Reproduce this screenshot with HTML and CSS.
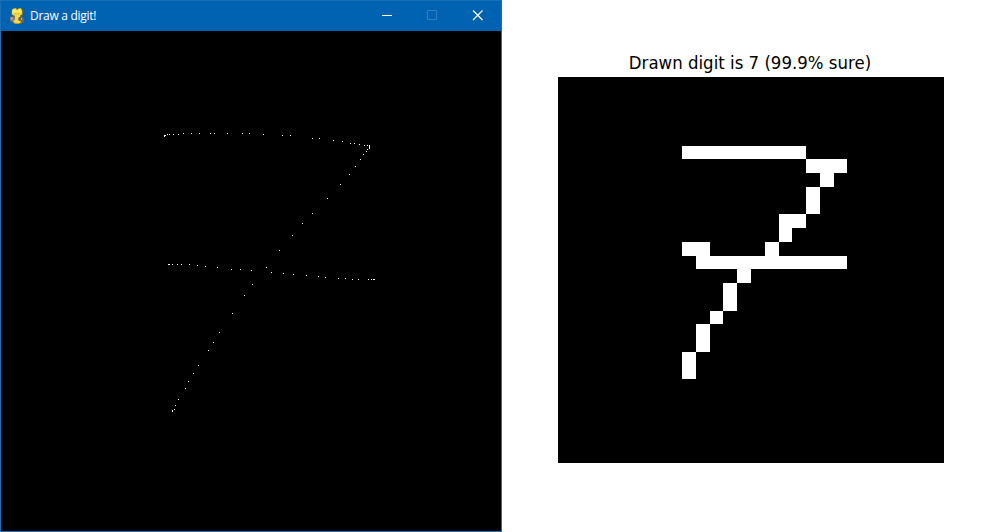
FILE: index.html
```
<!DOCTYPE html>
<html lang="en">
<head>
<meta charset="utf-8">
<title>Draw a digit!</title>
<link rel="stylesheet" href="styles.css">
</head>
<body>
<main class="desktop">
  <section class="window">
    <header class="titlebar">
      <svg class="app-icon" viewBox="0 0 16 18" width="16" height="18">
        <path d="M3 2 5 1H7L8 2 10 1H12L14 3V8L12 9 15 11V14L12 17H5L3 15 1 14V10L4 9 2 7Z" fill="#736d48"/>
        <path d="M3 3 5 1.500H7L8 3 10 1.500H12L13 4V7L11 8.500H5L3 7Z" fill="#fbe34a"/>
        <path d="M6 8H11V13L12 15 10 16.500H6L4 14V13L6 12Z" fill="#f3d943"/>
        <path d="M1 10H4L6 11V13L4 14 2 14 1 13Z" fill="#8a8583"/>
        <path d="M10 10H13L15 11V13L13 14H10L9 12Z" fill="#67625f"/>
        <path d="M2 11H4V12H2ZM12 11H13V13H12Z" fill="#c1b9a5"/>
        <path d="M5 3H6V5H5ZM10 3H11V5H10Z" fill="#fffbe0"/>
        <path d="M5 6.500H11V7.200H5Z" fill="#b39a34"/>
      </svg>
      <h1 class="caption">Draw a digit!</h1>
      <svg class="controls" viewBox="0 0 114 30" width="114" height="30" fill="none">
        <path d="M0 14.500H10" stroke="#fff"/>
        <path d="M45.500 9.500H54.500V18.500H45.500Z" stroke="#3381c3"/>
        <path d="M91 9.500 100.500 19M100.500 9.500 91 19" stroke="#fff" stroke-width="1.200"/>
      </svg>
    </header>
    <svg class="canvas" viewBox="1 31 500 500" width="500" height="500" shape-rendering="crispEdges">
      <path fill="#fff" d="M164 135h2v1h-1v1h-1zM167 134h1v1h-1zM169 134h1v1h-1zM173 134h1v1h-1zM178 134h1v1h-1zM183 133h1v1h-1zM191 133h1v1h-1zM199 133h1v1h-1zM210 133h1v1h-1zM214 133h1v1h-1zM227 133h1v1h-1zM242 133h1v1h-1zM249 133h1v1h-1zM263 134h1v1h-1z
      M282 135h1v1h-1zM290 135h1v1h-1zM312 138h1v1h-1zM319 138h1v1h-1zM333 140h1v1h-1zM342 141h1v1h-1zM350 143h1v1h-1zM354 143h1v1h-1zM359 144h1v1h-1zM364 145h1v1h-1zM367 145h1v1h-1zM369 145h1v4h-1z
      M367 149h1v1h-1zM366 151h1v1h-1zM363 154h1v1h-1zM360 159h1v1h-1zM355 166h1v1h-1zM349 174h1v1h-1zM340 184h1v1h-1zM327 198h1v1h-1zM312 213h1v1h-1zM302 223h1v1h-1zM292 235h1v1h-1zM279 250h1v1h-1zM266 267h1v1h-1zM252 284h1v1h-1zM244 295h1v1h-1z
      M232 313h1v1h-1zM219 332h1v1h-1zM213 342h1v1h-1zM208 350h1v1h-1zM198 365h1v1h-1zM193 373h1v1h-1zM188 381h1v1h-1zM185 388h1v1h-1zM178 399h1v1h-1zM175 405h1v1h-1zM174 409h1v1h-1zM172 410h1v2h-1z
      M168 264h2v1h-2zM172 264h1v1h-1zM177 264h1v1h-1zM181 264h1v1h-1zM189 264h1v1h-1zM197 265h1v1h-1zM205 266h1v1h-1zM217 267h1v1h-1zM231 269h1v1h-1zM240 269h1v1h-1zM251 270h1v1h-1zM271 272h1v1h-1zM283 273h1v1h-1zM293 274h1v1h-1zM306 275h1v1h-1zM318 276h1v1h-1zM325 277h1v1h-1zM338 278h1v1h-1zM345 278h1v1h-1zM352 279h1v1h-1zM358 279h1v1h-1zM368 279h1v1h-1zM371 279h1v1h-1zM373 279h2v1h-2z"/>
    </svg>
  </section>
  <section class="figure">
    <h2 class="figure-title">Drawn digit is 7 (99.9% sure)</h2>
    <svg class="plot" viewBox="558 77 386 386" width="386" height="386" shape-rendering="crispEdges">
      <path fill="#fff" d="M682 146h124v13h-124zM806 159h41v14h-41zM820 173h14v14h-14zM806 187h14v27h-14zM779 214h27v14h-27zM779 228h13v14h-13zM765 242h14v14h-14zM682 242h28v14h-28zM696 256h151v13h-151zM737 269h14v14h-14zM723 283h14v28h-14zM710 311h13v13h-13zM696 324h14v28h-14zM682 352h14v27h-14z"/>
    </svg>
  </section>
</main>
</body>
</html>
```
FILE: styles.css
```
* { box-sizing: border-box; }
body { margin: 0; background: #fff; overflow: hidden; }
.desktop { display: flex; width: 993px; height: 532px; }
.window { width: 502px; height: 532px; border: 1px solid #1a6fb5; background: #000; }
.titlebar { display: flex; align-items: center; height: 30px; padding: 0 5px 0 8px; background: #0063b1; }
.app-icon { flex: none; }
.caption { flex: 1; margin: 0 0 0 5px; color: #fff; font: 400 12px/28px "Open Sans", "Noto Sans", sans-serif; letter-spacing: -0.28px; white-space: nowrap; }
.controls { flex: none; }
.canvas { display: block; background: #000; }
.figure { display: flex; flex-direction: column; width: 386px; margin-left: 56px; padding-top: 52px; }
.figure-title { height: 25px; margin: 0 2px 0 0; color: #000; font: 400 16.6px/24px "DejaVu Sans", sans-serif; text-align: center; white-space: nowrap; transform: scaleY(1.09); transform-origin: 50% 14px; }
.plot { display: block; background: #000; }
```
